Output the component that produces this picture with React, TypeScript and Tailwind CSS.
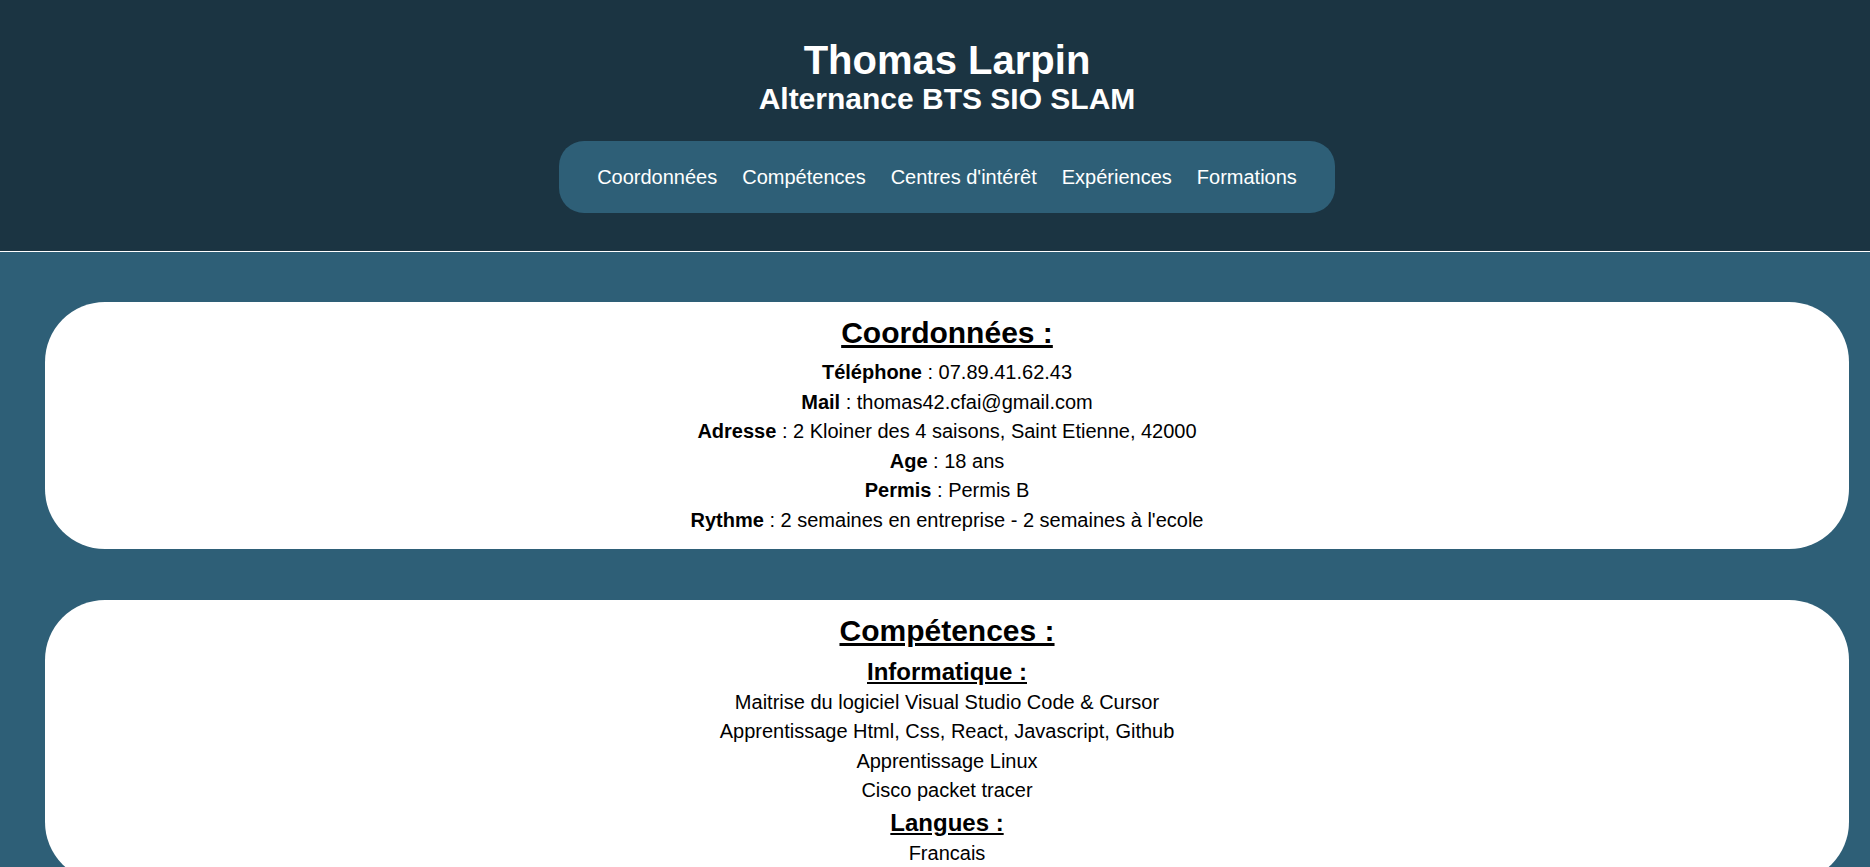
import React from 'react'

const navLinks = ['Coordonnées', 'Compétences', "Centres d'intérêt", 'Expériences', 'Formations']

const coordonnees = [
  { label: 'Téléphone', value: '07.89.41.62.43' },
  { label: 'Mail', value: 'thomas42.cfai@gmail.com' },
  { label: 'Adresse', value: '2 Kloiner des 4 saisons, Saint Etienne, 42000' },
  { label: 'Age', value: '18 ans' },
  { label: 'Permis', value: 'Permis B' },
  { label: 'Rythme', value: "2 semaines en entreprise - 2 semaines à l'ecole" },
]

const informatique = [
  'Maitrise du logiciel Visual Studio Code & Cursor',
  'Apprentissage Html, Css, React, Javascript, Github',
  'Apprentissage Linux',
  'Cisco packet tracer',
]

function Section({ title, children }: { title: string; children: React.ReactNode }) {
  return (
    <section className="w-full rounded-[60px] bg-white pt-[13px] pb-[13px] text-center text-black">
      <h2 className="text-[30px] leading-[35px] font-bold underline">{title}</h2>
      <div className="mt-2 flex flex-col items-center">{children}</div>
    </section>
  )
}

export default function App() {
  return (
    <div className="min-h-screen bg-[#2e5f77] font-['Liberation_Sans',Arial,sans-serif]">
      <header className="flex flex-col items-center border-b border-white bg-[#1b3442] pt-[38px] pb-[38px] pl-[24px] text-white">
        <h1 className="text-[40px] leading-[44px] font-bold">Thomas Larpin</h1>
        <h2 className="text-[30px] leading-[34px] font-bold">Alternance BTS SIO SLAM</h2>
        <nav className="mt-[25px] flex h-[72px] items-center gap-[25px] rounded-[25px] bg-[#2e5f77] px-[38px]">
          {navLinks.map((l) => (
            <a key={l} href={`#${l}`} className="text-[20px] leading-[23px] text-white">
              {l}
            </a>
          ))}
        </nav>
      </header>

      <main className="flex flex-col gap-[51px] pt-[50px] pb-[50px] pl-[45px] pr-[21px]">
        <Section title="Coordonnées :">
          {coordonnees.map((c) => (
            <p key={c.label} className="text-[20px] leading-[29.6px]">
              <b>{c.label}</b> : {c.value}
            </p>
          ))}
        </Section>

        <Section title="Compétences :">
          <h3 className="text-[24px] leading-[32px] font-bold underline">Informatique :</h3>
          {informatique.map((s) => (
            <p key={s} className="text-[20px] leading-[29.6px]">
              {s}
            </p>
          ))}
          <h3 className="text-[24px] leading-[33px] font-bold underline">Langues :</h3>
          <p className="text-[20px] leading-[29.6px]">Francais</p>
        </Section>
      </main>
    </div>
  )
}
